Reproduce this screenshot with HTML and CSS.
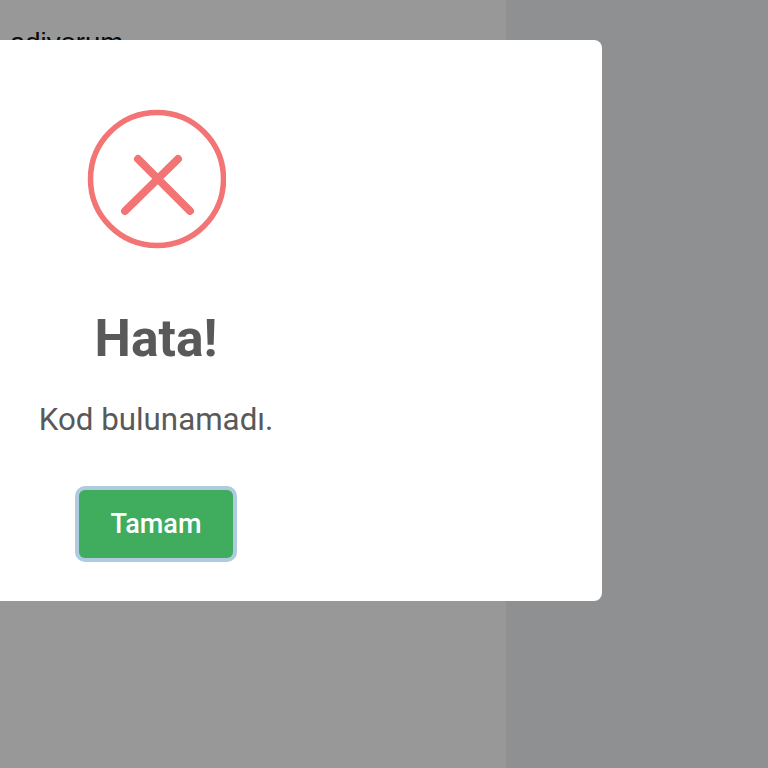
FILE: index.html
```html
<!DOCTYPE html>
<html lang="tr">
<head>
    <meta charset="UTF-8">
    <meta name="viewport" content="width=device-width, initial-scale=1.0">
    <title>Hata</title>
    <link rel="stylesheet" href="styles.css">
</head>
<body>
    <div class="page">
        <div class="page-main">
            <p class="page-text">adiyorum</p>
        </div>
        <div class="page-side"></div>
    </div>
    <div class="modal">
        <svg class="modal-icon" width="140" height="140" viewBox="0 0 140 140">
            <circle cx="71" cy="70" r="66.5" fill="none" stroke="#f27474" stroke-width="5.5"/>
            <path d="M52 50 L104 102 M92 50 L39 102" fill="none" stroke="#f27474" stroke-width="8" stroke-linecap="round"/>
        </svg>
        <h2 class="modal-title">Hata!</h2>
        <p class="modal-text">Kod bulunamadı.</p>
        <button class="modal-button">Tamam</button>
    </div>
</body>
</html>
```

FILE: styles.css
```css
html, body {
    margin: 0;
    height: 100%;
    overflow: hidden;
}
body {
    position: relative;
    font-family: Roboto, sans-serif;
    background-color: #8f9091;
}
.page {
    display: flex;
    height: 768px;
}
.page-main {
    width: 506px;
    background-color: #989898;
    padding: 27px 0 0 10px;
    box-sizing: border-box;
}
.page-text {
    margin: 0;
    font-family: "Liberation Sans", sans-serif;
    font-size: 27.5px;
    line-height: 32px;
    color: #0a0a0a;
}
.page-side {
    flex: 1;
}
.modal {
    position: absolute;
    top: 40px;
    left: -290px;
    width: 892px;
    height: 561px;
    display: flex;
    flex-direction: column;
    align-items: center;
    background-color: #fff;
    border-radius: 8px;
}
.modal-icon {
    display: block;
    margin-top: 69px;
}
.modal-title {
    margin: 62px 0 0;
    font-size: 51.5px;
    line-height: 56px;
    font-weight: 700;
    color: #595959;
}
.modal-text {
    margin: 35px 0 0;
    font-size: 31.3px;
    line-height: 36px;
    color: #595959;
}
.modal-button {
    margin-top: 52px;
    width: 154px;
    height: 68px;
    border: none;
    border-radius: 6px;
    background-color: #3fac5e;
    box-shadow: 0 0 0 4px #aecbe0;
    color: #fff;
    font-family: Roboto, sans-serif;
    font-weight: 500;
    font-size: 27px;
    cursor: pointer;
}
```
